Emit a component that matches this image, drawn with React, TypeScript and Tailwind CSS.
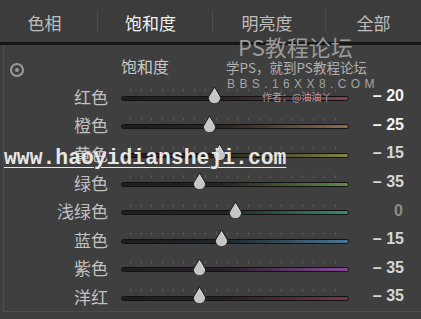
import React from "react";

type Row = { label: string; pos: number; value: string; bright: boolean; track: string };

const rows: Row[] = [
  { label: "红色", pos: 93, value: "– 20", bright: true, track: "bg-[linear-gradient(to_right,#1e1e1e_0%,#262226_45%,#7e4656_100%)]" },
  { label: "橙色", pos: 88, value: "– 25", bright: true, track: "bg-[linear-gradient(to_right,#1e1e1e_0%,#282420_45%,#8e6c4c_100%)]" },
  { label: "黄色", pos: 98, value: "– 15", bright: false, track: "bg-[linear-gradient(to_right,#1e1e1e_0%,#262620_45%,#848442_100%)]" },
  { label: "绿色", pos: 78, value: "– 35", bright: false, track: "bg-[linear-gradient(to_right,#1e1e1e_0%,#222620_45%,#5e8c42_100%)]" },
  { label: "浅绿色", pos: 114, value: "0", bright: false, track: "bg-[linear-gradient(to_right,#1e1e1e_0%,#202624_45%,#3a8a76_100%)]" },
  { label: "蓝色", pos: 100, value: "– 15", bright: false, track: "bg-[linear-gradient(to_right,#1e1e1e_0%,#202428_45%,#4a7896_100%)]" },
  { label: "紫色", pos: 78, value: "– 35", bright: false, track: "bg-[linear-gradient(to_right,#1e1e1e_0%,#262028_45%,#8a4a9a_100%)]" },
  { label: "洋红", pos: 78, value: "– 35", bright: false, track: "bg-[linear-gradient(to_right,#1e1e1e_0%,#262024_45%,#7a3452_100%)]" },
];

const ticks = [9, 20, 30, 41, 52, 62, 73, 84, 95, 106, 116, 127, 138, 149, 160, 170, 181, 192, 203, 214];

function Thumb({ x }: { x: number }) {
  return (
    <svg
      className="absolute top-[0px]"
      style={{ left: x - 7.5 }}
      width="15"
      height="17"
      viewBox="0 0 15 17"
    >
      <path d="M7.5 1 L13 10 A6 5.5 0 1 1 2 10 Z" fill="#c6c6c6" stroke="#1a1a1a" strokeWidth="1" />
      <path d="M7.5 3 L10.5 8.5" stroke="#e4e4e4" strokeWidth="1" opacity="0.6" />
    </svg>
  );
}

function Slider({ row }: { row: Row }) {
  return (
    <div className="relative w-[228px] h-[20px] flex items-center pt-[4px]">
      {ticks.map((t) => (
        <div key={t} className="absolute top-[3px] w-px h-[3px] bg-[#585858]" style={{ left: t }} />
      ))}
      <div className={`w-full h-[5px] rounded-full border border-[#121212] ${row.track}`} />
      <Thumb x={row.pos} />
    </div>
  );
}

export default function App() {
  const cjk = { fontFamily: '"Noto Sans CJK SC", "Noto Sans", sans-serif' };
  return (
    <div className="relative w-[421px] h-[319px] overflow-hidden bg-[#3f3f3f] text-[#c4c4c4]" style={cjk}>
      {/* tab bar */}
      <div className="flex items-center h-[42px] bg-[#3c3c3c] text-[17px] leading-none">
        <div className="w-[97px] flex justify-center pr-[8px] pt-[2px] text-[#bdbdbd]">色相</div>
        <div className="w-px h-[22px] bg-[#2c2c2c] border-r border-[#4c4c4c]" />
        <div className="w-[114px] flex justify-center pr-[9px] pt-[2px] text-[#f2f2f2]">饱和度</div>
        <div className="w-px h-[22px] bg-[#2c2c2c] border-r border-[#4c4c4c]" />
        <div className="w-[112px] flex justify-center pr-[4px] pt-[2px] text-[#bdbdbd]">明亮度</div>
        <div className="w-px h-[22px] bg-[#2c2c2c] border-r border-[#4c4c4c]" />
        <div className="flex-1 flex justify-center pt-[2px] text-[#bdbdbd]">全部</div>
      </div>
      <div className="h-[3px] bg-[#161616]" />

      {/* body */}
      <div className="ml-[3px] mr-[0px] h-[267px] border-l border-b border-[#4d4d4d] flex flex-col">
        <div className="h-[37px] flex items-center">
          <div className="ml-[6px] mt-[13px] w-[14px] h-[14px] rounded-full border-2 border-[#9a9a9a] flex items-center justify-center">
            <div className="w-[4px] h-[4px] rounded-full bg-[#9a9a9a]" />
          </div>
          <div className="ml-[97px] mt-[4px] text-[16px] leading-none text-[#c8c8c8]">饱和度</div>
        </div>
        {rows.map((r) => (
          <div key={r.label} className="h-[28.6px] flex items-center">
            <div className="w-[104px] text-right text-[17px] leading-none text-[#c2c2c2]">{r.label}</div>
            <div className="ml-[13px]">
              <Slider row={r} />
            </div>
            <div
              className={`w-[55px] text-right text-[16px] leading-none font-semibold ${
                r.value === "0" ? "text-[#8c8c8c] pr-[1px]" : r.bright ? "text-[#f4f4f4]" : "text-[#d6d6d6]"
              }`}
              style={{ fontFamily: '"Liberation Sans", Arial, sans-serif' }}
            >
              {r.value}
            </div>
          </div>
        ))}
      </div>

      {/* watermarks */}
      <div className="absolute left-[238px] top-[35px] text-[22px] leading-none text-[#a6a6a6] opacity-90">PS教程论坛</div>
      <div className="absolute left-[226px] top-[61px] text-[13.5px] leading-none text-[#b0b0b0]">学PS，就到PS教程论坛</div>
      <div
        className="absolute left-[227px] top-[78px] text-[12px] leading-none tracking-[4.4px] text-[#a4a4a4]"
        style={{ fontFamily: '"Liberation Sans", Arial, sans-serif' }}
      >
        BBS.16XX8.COM
      </div>
      <div className="absolute left-[262px] top-[92px] text-[10px] leading-none text-[#c0a8b0] opacity-90">作者：@油油丫</div>
      <div
        className="absolute left-[4px] top-[148px] text-[21.4px] leading-none font-bold text-[#e6e6e6] underline decoration-1 underline-offset-[3px]"
        style={{ fontFamily: '"Liberation Mono", "Courier New", monospace' }}
      >
        www.haoyidiansheji.com
      </div>
    </div>
  );
}
